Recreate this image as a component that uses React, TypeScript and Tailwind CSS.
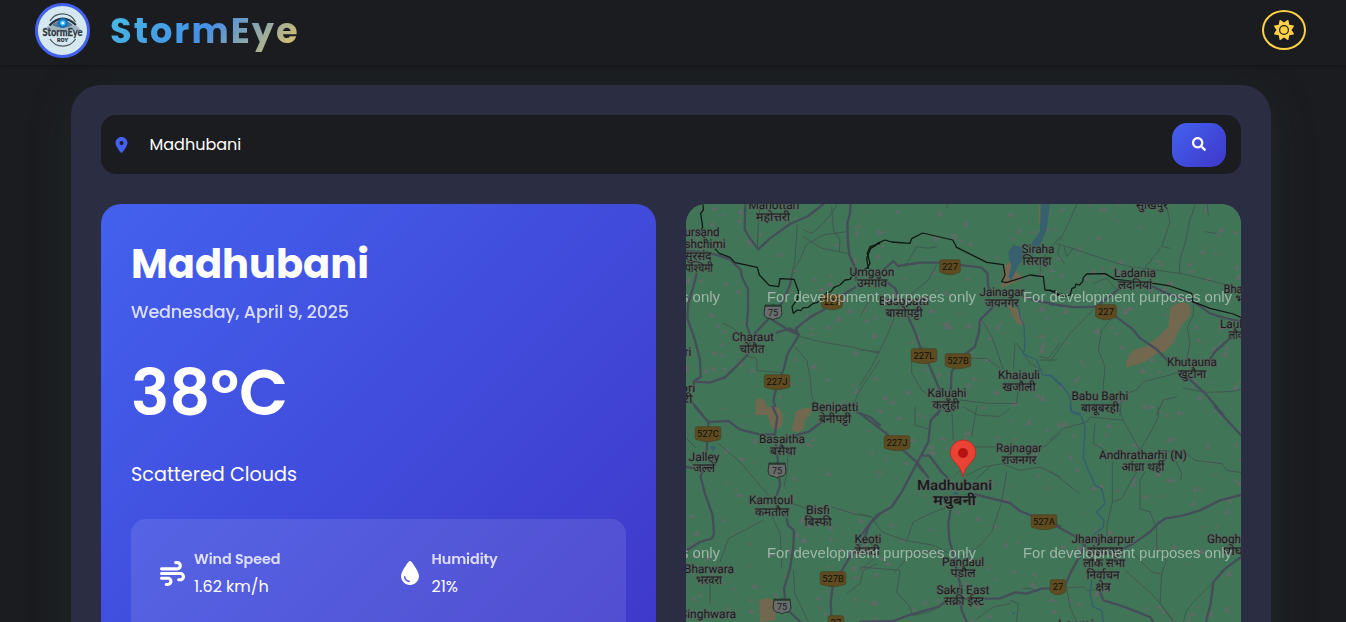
import { FaSearch } from "react-icons/fa";
import { FaDroplet, FaLocationDot, FaSun, FaWind } from "react-icons/fa6";

type Tile = { x: number; y: number; major: string[]; minor: string[]; border: string[]; river: string[]; town: string[]; lake: string[] };

const tiles: Tile[] = [
  {
    x: 680, y: 200,
    major: [
      "M196 0 L194 88 L208 112 L235 148 L270 115 L330 72 L385 48 L430 12",
      "M512 0 L510 40 L502 70 L504 130 L508 165 L526 205 L528 240",
      "M15 152 L80 158 L100 162 L150 178 L182 210 L186 232 L204 268 L204 330 L200 375 L210 405",
      "M50 220 L40 260 L25 310 L22 355 L45 420 L60 480 L62 530 L40 545 L90 548 L135 532 L170 498 L205 462 L210 430",
      "M225 400 L260 362 L300 320 L330 255 L334 235", "M262 350 L330 393 L356 404",
      "M290 398 L330 385 L358 404 L322 462 L312 505 L290 560 L280 600 L292 645",
      "M353 404 L348 385 L390 352 L430 330 L480 290 L526 262", "M30 600 L68 645",
    ],
    minor: [
      "M333 235 L345 180 L352 75 M340 210 L360 180 L378 135 L430 105 L500 95", "M370 90 L395 100 L420 80 L455 40 L470 15",
      "M370 110 L425 145 L505 160 M345 215 L332 235", "M232 140 L235 70 L240 20", "M455 20 L460 90 L480 120 L478 155",
      "M362 410 L420 425 L510 440 L600 460", "M345 440 L380 480 L390 530 L395 590 L420 640", "M600 480 L540 570 L505 645",
      "M205 470 L230 475 L232 512 L305 518", "M130 370 L160 385 L200 425",
    ],
    border: ["M68 0 L70 30 L62 40 L68 80 L60 100 L90 130 L118 160 L150 172 L165 188 L232 202 L238 225 L268 256 L296 260 L300 236 L342 238 L356 275 L352 298 L336 320 L340 340 L352 330 L362 332 L370 323 L385 322 L400 310 L412 308 L422 298 L440 278 L452 276 L462 262 L480 255 L495 240 L510 238 L520 222 L560 205 L570 190 L562 160 L570 140 L600 130"],
    river: [], town: ["M228 602 Q238 588 254 602 L270 645 L225 645 Z", "M340 645 Q355 620 395 625 L385 645 Z"], lake: [],
  },
  {
    x: 860, y: 200,
    major: [
      "M70 210 L100 183 L115 198 L180 188 L240 188 L365 203 L382 220 L385 262 L400 280",
      "M80 245 L105 265 L120 300 L145 352 L166 398 L180 440 L205 490 L242 575",
      "M400 320 L360 360 L357 395 L345 440 L315 462 L275 515 L272 570", "M480 285 L520 300 L600 316", "M240 630 L230 645",
    ],
    minor: [
      "M115 202 L140 190 L170 140 L205 145 L230 140", "M230 195 L205 240 L120 310 L80 410 L35 500 L0 555",
      "M0 450 L55 455 M190 440 L155 460 L155 520 L185 570 L210 590", "M365 360 L395 410 L410 450 L430 510",
      "M335 475 L380 475 L420 505", "M465 430 L460 510 M470 430 L510 490 L545 510",
      "M540 470 L565 475 L600 430 M540 480 L590 480", "M300 600 L380 610 L470 610 L475 560",
      "M0 350 L40 280 M260 0 L261 25", "M540 220 L545 180 L600 110",
    ],
    border: ["M25 205 L20 175 L32 145 L45 138 L52 130 L75 120 L95 126 L150 130 L155 116 L188 99 L278 120 L290 142 L380 187 L430 194 L435 225 L425 245 L438 248 L470 238 L510 225 L550 230 L555 270 L575 272 L600 285"],
    river: ["M476 315 L480 350 L492 375 L495 440 L490 462 L530 480 L548 524 L575 528 L600 555"],
    town: ["M430 200 L450 185 L475 220 L490 235 L460 250 L425 265 Z", "M440 310 L478 330 L495 378 L470 370 Z", "M537 12 L545 12 L545 75 L537 70 Z"],
    lake: ["M542 12 L570 12 L560 90 L545 125 L515 170 L515 130 L540 95 Z", "M445 155 L460 135 L500 145 L495 175 L475 195 L455 240 L445 232 L455 195 L447 180 Z"],
  },
  {
    x: 1050, y: 200,
    major: [
      "M0 312 L75 322 L140 320 L205 268", "M305 258 L350 280 L430 305 L480 340 L520 353 L573 365",
      "M195 348 L245 385 L270 415 L320 448 L355 485", "M540 415 L495 455 L470 495", "M410 530 L465 580 L520 645",
    ],
    minor: [
      "M20 130 L170 180 L230 198 L400 222 L520 252", "M80 12 L60 60 L30 120 M30 135 L22 160 L42 190", "M42 140 L50 170 L70 145",
      "M348 12 L360 65 L335 140 L280 210", "M440 0 L420 60 L405 130 L390 180 L388 220", "M470 0 L475 45 M465 95 L498 100 M340 140 L360 145",
      "M140 320 L60 400 L0 485", "M200 270 L170 235 L130 250", "M185 355 L155 390 L145 450 L165 500 L158 580",
      "M430 305 L430 345 L412 380 L420 430 L410 480", "M230 580 L260 570 L280 545 L360 525 L400 510", "M400 565 L470 577 L540 575 L573 568",
      "M210 645 L215 590", "M320 645 L340 600 L380 590",
    ],
    border: ["M0 270 L8 276 L14 272 L22 286 L35 282 L42 290 L60 285 L66 265 L75 262 L78 252 L88 255 L98 245 L100 232 L110 222 L165 221 L195 238 L310 250 L360 258 L425 280 L428 305 L480 325 L550 342 L573 352"],
    river: ["M0 525 L35 555 L60 590 L65 635 L90 640"],
    town: ["M360 325 Q385 300 412 310 Q430 325 415 355 L395 375 L370 425 Q345 465 318 462 L285 485 L232 502 Q220 490 250 450 L285 440 L325 410 L355 380 Z"], lake: [],
  },
  {
    x: 680, y: 407,
    major: [
      "M45 0 L85 45 L145 42 L180 68 L240 82 L282 82", "M85 45 L80 130", "M278 0 L292 30 L285 82 L295 175 L300 235 L290 265",
      "M345 85 L385 75 L425 45", "M530 15 L570 30 L600 55", "M20 180 L68 188 L62 210 L75 260 L98 325 L102 380 L95 395 L60 405 L20 430",
      "M320 335 L324 355 L342 370 L340 420 L330 485 L312 545 L318 605 L362 645", "M600 320 L570 350 L550 400 L510 450 L480 500 L458 540 L452 585 L455 645",
      "M545 645 L600 645",
    ],
    minor: [
      "M115 110 L180 165 L240 235 L265 265", "M20 95 L45 120", "M340 290 L380 305 M455 300 L520 320 L575 330",
      "M275 325 L300 380 L305 480", "M250 340 L145 395 L120 465 M90 530 L90 590 M340 490 L345 560 L385 645",
      "M325 135 L320 200 L312 240", "M590 470 L550 490 L540 530 L500 560",
    ],
    border: [], river: [],
    town: ["M228 0 L295 0 Q320 35 300 62 Q275 80 270 45 L262 22 Q245 22 228 12 Z", "M345 30 Q365 0 395 5 L390 25 Q370 35 372 62 Q352 85 335 68 Z", "M238 580 Q275 565 290 590 L285 640 L240 645 Z"],
    lake: ["M90 118 L105 118 L106 125 L98 133 Z"],
  },
  {
    x: 860, y: 407,
    major: [
      "M0 20 L80 80 L130 130 L175 170 L205 212", "M240 10 L212 40 L205 105 L170 170 L125 255 L95 300 L50 325 L15 370 L0 390",
      "M182 145 L208 146 L245 195 L265 215 M170 170 L190 195", "M345 262 L450 288 L480 312 L520 328 L600 358",
      "M272 305 L265 350 L268 400 L280 440 L300 530 L305 610 L320 645", "M0 645 L100 642 L145 625 L235 600 L265 577 L420 574 L465 556 L500 560 L545 545 L600 544",
    ],
    minor: [
      "M335 120 L405 120 M320 205 L370 180 L425 170 L480 190 L540 180 L600 210", "M350 215 L395 175 M285 205 L310 180",
      "M440 195 L425 285 L405 345 L395 375 L365 410 L330 440 L300 450", "M600 80 L545 125", "M350 0 L335 90",
      "M275 0 L280 100 M165 0 L165 55 L205 65", "M310 0 L355 25 L420 28 L450 5", "M0 320 L35 330 L65 375 L135 400 L220 415 L270 440",
      "M140 400 L160 345 L210 320 L260 300", "M0 480 L120 490 L110 555 L150 600 L155 620", "M35 400 L40 455 L0 490",
      "M230 430 L150 440 L130 465 L105 495", "M490 545 L515 545 L535 555 M470 645 L475 590 L450 580",
      "M160 625 L210 615 L235 600 M350 635 L400 600 L450 590",
    ],
    border: [], river: [], town: [], lake: ["M280 255 L297 256 L295 263 L279 262 Z", "M456 616 L465 616 L463 623 L456 621 Z"],
  },
  {
    x: 1050, y: 407,
    major: [
      "M495 0 L573 85", "M573 264 L510 280 L450 310 L400 325 L345 335 L325 348 L300 375 L250 410 L190 440",
      "M20 358 L75 388 L105 415 L85 455 L60 500 L48 530", "M573 450 L525 485 L490 525 L482 590 L468 645", "M150 555 L160 580 L210 595 L250 610 L300 630 L310 645",
    ],
    minor: [
      "M0 98 L40 65 L110 45 L120 30 L220 40 L205 0", "M135 50 L130 110 L165 130", "M220 40 L270 130 L300 80 L325 30 L325 0",
      "M330 130 L410 140 L435 160 L515 170 L530 190 L573 197", "M365 135 L395 200 L392 220", "M187 165 L187 285 L170 360 L172 385",
      "M285 195 L270 220 L270 305 L300 315 L320 365 L320 425 L350 460 L335 500 L330 590 L370 645", "M187 285 L215 275 L245 220 L260 195",
      "M0 190 L88 260", "M48 530 L60 600 L80 645 M48 542 L100 540 L115 552 L150 545", "M225 490 L310 565 L370 640", "M250 440 L305 495 L335 502",
      "M490 525 L435 580 L410 610 L400 645",
    ],
    border: [],
    river: ["M60 0 L65 15 L92 25 L105 60 L100 150 L115 190 L135 235 L155 245 L165 290 L140 315 L162 340 L160 360 L130 385", "M125 520 L120 560 L130 600 L155 610 L160 645"],
    town: [], lake: [],
  },
];

// [text, centre x, baseline y, width]
const places: [string, number, number, number][] = [
  ["Mahottari", 774, 209, 51], ["महोत्तरी", 773, 221, 34], ["ursand", 702, 236, 35], ["shchimi", 705, 248, 41], ["सुरसंद", 698, 260, 27], ["पश्चिमी", 699, 272, 28],
  ["Umgaon", 872, 275.5, 45], ["उमगाँव", 872, 287, 30], ["Charaut", 753, 341, 42], ["चोरौत", 752, 353, 25], ["ri", 688, 356, 7], ["ori", 688, 392, 15], ["री", 688, 403, 9],
  ["Benipatti", 835, 411, 47], ["बेनीपट्टी", 835, 423, 32], ["Basopatti", 904, 305, 50], ["बासोपट्टी", 904, 317, 37], ["Siraha", 1038, 253, 33], ["सिराहा", 1037, 265, 29],
  ["Jainagar", 1002, 295.5, 45], ["जयनगर", 1002, 307, 34], ["Khaiauli", 1019, 379, 42], ["खजौली", 1019, 391, 33], ["Kaluahi", 947, 397, 39], ["कलुँही", 946, 409, 27],
  ["सुखिपुर", 1152, 209, 32], ["Ladania", 1135, 277, 42], ["लदनियां", 1135, 289, 34], ["Bha", 1233, 293, 19], ["भ", 1240, 303, 9], ["Laul", 1231, 327.5, 22], ["लौक", 1237, 339, 17],
  ["Khutauna", 1192, 366, 50], ["खुटौना", 1192, 378, 28], ["Babu Barhi", 1100, 400, 57], ["बाबूबरही", 1100, 412, 38],
  ["Basaitha", 782, 443, 46], ["बसैथा", 783, 455, 26], ["Jalley", 704, 460.5, 31], ["जल्ले", 704, 472, 22], ["Kamtoul", 771, 504, 44], ["कमतौल", 772, 516, 34],
  ["Bisfi", 818, 514, 24], ["बिस्फी", 818, 526, 27], ["Bharwara", 709, 572.5, 50], ["भरवरा", 709, 584, 26], ["Singhwara", 708, 618, 56],
  ["Keoti", 868, 543, 27], ["केवटी", 867, 555, 25], ["Rajnagar", 1019, 452, 46], ["राजनगर", 1019, 464, 35], ["Pandaul", 963, 565.5, 42], ["पंडौल", 963, 577, 25],
  ["Sakri East", 963, 593.5, 53], ["सक्री ईस्ट", 964, 605, 40], ["Andhratharhi (N)", 1143, 459, 88], ["आंध्रा थर्ही", 1143, 471, 43],
  ["Jhanjharpur", 1103, 543, 63], ["झंझारपुर", 1105, 555, 36], ["लोक सभा", 1104, 567, 42], ["निर्वाचन", 1103, 579, 33], ["क्षेत्र", 1103, 591, 15],
  ["Ghogh", 1224, 543, 34], ["घोघ", 1233, 555, 20], ["Laxmi", 1076, 628, 36],
];

const shields: [string, number, number][] = [
  ["227", 950, 267], ["227", 832, 302], ["227J", 777, 382], ["227L", 924, 356], ["527B", 958, 361], ["227", 1106, 312], ["527C", 708, 434],
  ["227J", 897, 443], ["527A", 1044, 522], ["527B", 833, 579], ["27", 1058, 587], ["27", 836, 623],
];

const interstates: [number, number][] = [[773, 312], [777, 470], [782, 606]];

function makePatches() {
  let seed = 41;
  const next = () => {
    seed = (seed * 16807) % 2147483647;
    return seed / 2147483647;
  };
  const patches: string[] = [];
  for (let i = 0; i < 520; i++) {
    const x = 686 + next() * 555;
    const y = 204 + next() * 418;
    const s = 1.8 + next() * 2.8;
    const pts = [0, 1, 2].map((k) => {
      const a = next() * 1.2 + k * 2.1;
      return `${(x + Math.cos(a) * s).toFixed(1)} ${(y + Math.sin(a) * s).toFixed(1)}`;
    });
    patches.push(`M${pts.join("L")}Z`);
  }
  return patches.join("");
}

const patches = makePatches();

function RegionMap() {
  return (
    <svg viewBox="686 204 555 418" className="block h-[418px] w-[555px]" fontFamily="Roboto, 'Noto Sans', sans-serif">
      <rect x="686" y="204" width="555" height="418" fill="#407657" />
      <path d={patches} fill="#66686a" opacity="0.8" />
      {tiles.map((t) => (
        <g key={`${t.x}-${t.y}`} transform={`translate(${t.x} ${t.y}) scale(0.33333)`} fill="none" strokeLinejoin="round" strokeLinecap="round">
          <path d={t.town.join("")} fill="#72684f" />
          <path d={t.lake.join("")} fill="#36606d" />
          <path d={t.minor.join("")} stroke="#40574f" strokeWidth="3" />
          <path d={t.river.join("")} stroke="#355d70" strokeWidth="4" />
          <path d={t.major.join("")} stroke="#454d59" strokeWidth="7" />
          <path d={t.border.join("")} stroke="#101713" strokeWidth="3.8" />
        </g>
      ))}
      {shields.map(([label, x, y]) => {
        const w = label.length === 4 ? 12.8 : label.length === 3 ? 10.3 : 7.8;
        return (
          <g key={`${label}-${x}`}>
            <path d={`M${x - w + 2} ${y - 7.3} H${x + w - 2} Q${x + w} ${y - 7.3} ${x + w} ${y - 5.3} V${y + 4} Q${x + w} ${y + 5.5} ${x + w - 2} ${y + 5.8} L${x + 3} ${y + 7.6} H${x - 3} L${x - w + 2} ${y + 5.8} Q${x - w} ${y + 5.5} ${x - w} ${y + 4} V${y - 5.3} Q${x - w} ${y - 7.3} ${x - w + 2} ${y - 7.3} Z`} fill="#5e4b20" stroke="#4a4127" strokeWidth="0.7" />
            <text x={x} y={y + 3.3} fontSize="9.4" textAnchor="middle" fill="#100e0a">{label}</text>
          </g>
        );
      })}
      {interstates.map(([x, y]) => (
        <g key={y}>
          <path d={`M${x - 8} ${y - 7} Q${x - 4} ${y - 5.5} ${x} ${y - 7} Q${x + 4} ${y - 5.5} ${x + 8} ${y - 7} L${x + 8.5} ${y - 2} Q${x + 10} ${y + 4} ${x + 6} ${y + 6} Q${x + 2} ${y + 6} ${x} ${y + 8} Q${x - 2} ${y + 6} ${x - 6} ${y + 6} Q${x - 10} ${y + 4} ${x - 8.5} ${y - 2} Z`} fill="#696c6c" stroke="#26302a" strokeWidth="1" />
          <path d={`M${x - 8} ${y - 6.3} H${x + 8}`} stroke="#26392c" strokeWidth="2" />
          <text x={x} y={y + 4} fontSize="9" textAnchor="middle" fill="#191b1a">75</text>
        </g>
      ))}
      <g fontSize="12" fill="#181a1a" stroke="#56675e" strokeWidth="1.8" strokeLinejoin="round" paintOrder="stroke" textAnchor="middle" textRendering="geometricPrecision">
        {places.map(([name, x, y, w]) => (
          <text key={`${name}-${y}`} x={x} y={y} textLength={w} lengthAdjust="spacingAndGlyphs">{name}</text>
        ))}
        <text x="954.5" y="490" fontSize="14" fontWeight="500" textLength="75" lengthAdjust="spacingAndGlyphs">Madhubani</text>
        <text x="954.5" y="505" fontSize="14" fontWeight="600" textLength="43" lengthAdjust="spacingAndGlyphs">मधुबनी</text>
      </g>
      <g fontFamily="'Liberation Sans', sans-serif" fontSize="14.6" fill="#d5ded8" opacity="0.62">
        {[302, 558].map((y) =>
          [511, 767, 1023].map((x) => (
            <text key={`${x}-${y}`} x={x} y={y} textLength="209" lengthAdjust="spacingAndGlyphs">For development purposes only</text>
          )),
        )}
      </g>
      <path d="M963 477 C961.5 469 958.5 466.5 954 461 C951.5 458 950.3 456 950.3 452.7 A12.7 12.7 0 0 1 975.7 452.7 C975.7 456 974.5 458 972 461 C967.5 466.5 964.5 469 963 477 Z" fill="#ea4335" stroke="#c5221f" strokeWidth="0.8" />
      <circle cx="963" cy="453" r="5" fill="#b31412" />
    </svg>
  );
}

function Logo() {
  return (
    <div className="h-[55px] w-[55px] overflow-hidden rounded-full border-[3px] border-[#4361ee] bg-[#d6e8ef]">
      <svg viewBox="0 0 49 49" className="h-full w-full">
        <g fill="none" stroke="#4b5862" strokeWidth="1.3">
          <path d="M12 15 A14.5 14.5 0 0 1 37.5 16" />
          <path d="M12 33 A15 15 0 0 0 37.5 33" />
        </g>
        <path d="M7.5 24 Q9 18.5 14 19.5 Q24.5 10.5 35 19.5 Q40 18.5 42 24 Z" fill="#a3b6c3" />
        <path d="M11.5 19.5 Q24.5 6 38 19" fill="none" stroke="#26323f" strokeWidth="2.2" />
        <path d="M14 19 Q24.5 9.5 35 19 Q24.5 25 14 19 Z" fill="#587a94" />
        <circle cx="24.8" cy="17" r="5" fill="#126fbd" />
        <circle cx="24.8" cy="17" r="2.8" fill="#3fc0fb" />
        <circle cx="24.8" cy="17" r="1.3" fill="#e9fbff" />
        <text x="24.5" y="29.8" textAnchor="middle" fontFamily="Lato, sans-serif" fontSize="10.5" fontWeight="900" fill="#333c46" stroke="#333c46" strokeWidth="0.3" textLength="40" lengthAdjust="spacingAndGlyphs">StormEye</text>
        <text x="24.7" y="35.8" textAnchor="middle" fontFamily="Inter, sans-serif" fontSize="5.4" fontWeight="900" fill="#303a44" textLength="11.5" lengthAdjust="spacingAndGlyphs">ROY</text>
      </svg>
    </div>
  );
}

export default function App() {
  return (
    <div className="h-[622px] overflow-hidden bg-[#1b1c1f] font-[Poppins,Inter,sans-serif] text-white">
      <header className="relative z-10 flex h-[65px] items-center justify-between bg-[#1b1c1f] pr-10 pb-[5px] pl-[35px] shadow-[0_1px_4px_rgba(0,0,0,0.4)]">
        <div className="flex items-center gap-5">
          <Logo />
          <h1 className="bg-[linear-gradient(135deg,#48bfe3,#458fe6_50%,#efc75a)] bg-clip-text text-[35.2px] leading-[53px] font-bold tracking-[2px] text-transparent">StormEye</h1>
        </div>
        <button aria-label="Toggle theme" className="flex h-10 w-11 items-center justify-center rounded-[50%] border-2 border-[#ffd147] text-[#ffd147]">
          <FaSun size={20} />
        </button>
      </header>
      <main className="mt-5 ml-[71px] h-[620px] w-[1200px] rounded-[30px] bg-[#2b2d42] p-[30px] shadow-[0_10px_40px_rgba(36,58,54,0.42)]">
        <div className="flex h-[59px] items-center rounded-[15px] bg-[#1b1c1f] pr-[15px] pl-[14px]">
          <FaLocationDot size={16} className="w-[13px] text-[#4361ee]" />
          <span className="ml-[21.5px] flex-1 text-[16px]">Madhubani</span>
          <button aria-label="Search" className="flex h-11 w-[54px] items-center justify-center rounded-[15px] bg-[linear-gradient(135deg,#4361ee,#3f37c9)] pb-px">
            <FaSearch size={14} />
          </button>
        </div>
        <div className="mt-[30px] grid grid-cols-2 gap-[30px]">
          <section className="h-[466px] rounded-[20px] bg-[linear-gradient(135deg,#4361ee,#3f37c9)] px-[30px] pt-[30px]">
            <h2 className="h-[60px] text-[40px] leading-[60px] font-bold">Madhubani</h2>
            <p className="mt-[5px] text-[17.6px] leading-[27px] font-medium tracking-[-0.17px] opacity-80">Wednesday, April 9, 2025</p>
            <div className="mt-[29px] h-[76px] text-[64px] leading-[76px] font-semibold">38°C</div>
            <p className="mt-[29px] text-[19.2px] leading-[29px]">Scattered Clouds</p>
            <div className="mt-[30px] grid h-[140px] grid-cols-[238px_1fr] rounded-[15px] bg-white/10 px-[29px] pt-[27px]">
              <div className="flex h-[54px] items-center gap-[9px]">
                <FaWind size={25} />
                <div>
                  <div className="text-[14.4px] leading-[24px] font-semibold tracking-[-0.1px] opacity-80">Wind Speed</div>
                  <div className="mt-[2px] text-[16px] leading-[27px]">1.62 km/h</div>
                </div>
              </div>
              <div className="flex h-[54px] items-center gap-[12px] pl-[2.5px]">
                <FaDroplet size={24} className="w-[18px]" />
                <div className="pl-px">
                  <div className="text-[14.4px] leading-[24px] font-semibold tracking-[-0.1px] opacity-80">Humidity</div>
                  <div className="mt-[2px] text-[16px] leading-[27px]">21%</div>
                </div>
              </div>
            </div>
          </section>
          <section className="h-[466px] overflow-hidden rounded-[20px] bg-[#407657]">
            <RegionMap />
          </section>
        </div>
      </main>
    </div>
  );
}
